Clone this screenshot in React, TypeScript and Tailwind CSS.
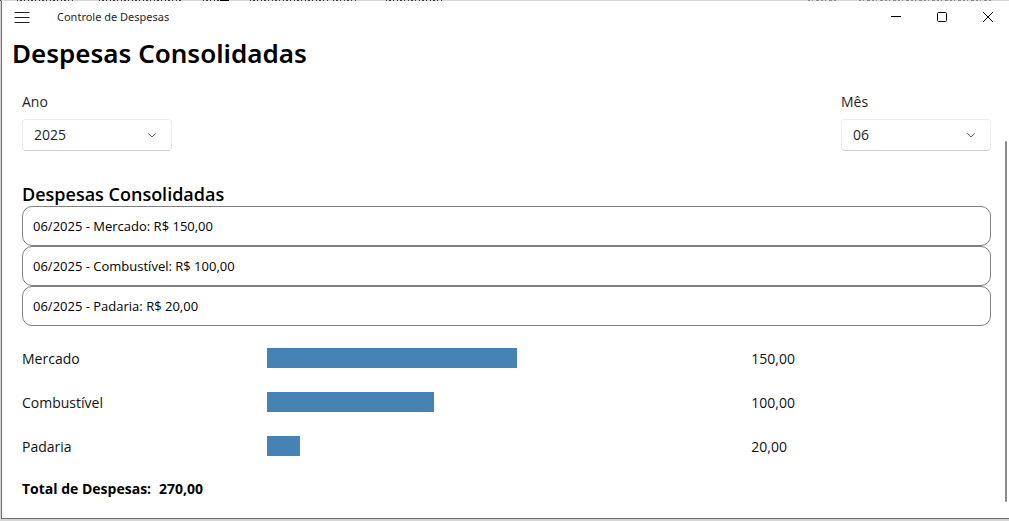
import { useState } from "react";

const years = ["2023", "2024", "2025"];
const months = ["01", "02", "03", "04", "05", "06", "07", "08", "09", "10", "11", "12"];

const expenses = [
  { category: "Mercado", amount: 150 },
  { category: "Combustível", amount: 100 },
  { category: "Padaria", amount: 20 },
];

const MAX_BAR = 250;

function money(value: number) {
  return value.toFixed(2).replace(".", ",");
}

type PickerProps = {
  id: string;
  label: string;
  value: string;
  options: string[];
  onChange: (value: string) => void;
};

function Picker({ id, label, value, options, onChange }: PickerProps) {
  return (
    <div className="flex flex-col gap-[7px]">
      <label htmlFor={id} className="text-sm text-[#1f1f1f]">
        {label}
      </label>
      <div className="relative">
        <select
          id={id}
          value={value}
          onChange={(event) => onChange(event.target.value)}
          className="block h-8 w-[150px] appearance-none rounded border border-[#ececec] border-b-[#d0d0d0] bg-white pl-[11px] text-sm text-[#1f1f1f]"
        >
          {options.map((option) => (
            <option key={option}>{option}</option>
          ))}
        </select>
        <svg
          className="pointer-events-none absolute top-3 right-4 h-2 w-2"
          viewBox="0 0 8 8"
          fill="none"
          stroke="#5f5f5f"
          aria-hidden="true"
        >
          <path d="M0.3 2.3 4 6l3.7-3.7" />
        </svg>
      </div>
    </div>
  );
}

/* Sliver of the window behind, visible above the title bar. */
function BackdropEdge() {
  return (
    <svg className="block h-px w-full" stroke="#3a3a3a" strokeWidth="1" aria-hidden="true">
      <path
        d="M0 .5h2M17 .5h58M99 .5h82M203 .5h26M250 .5h78M333 .5h24M386 .5h58"
        strokeDasharray="1 2 2 2 1 3"
      />
      <path d="M220 .5h9" stroke="#000" />
      <path d="M808 .5h30M859 .5h134" stroke="#8a8a8a" strokeDasharray="2 2 1 3 3 2" />
    </svg>
  );
}

function TitleBar() {
  return (
    <header className="flex h-8 items-center justify-between">
      <div className="flex items-center gap-[27px]">
        <button type="button" aria-label="Menu" className="pl-3">
          <svg className="h-4 w-4" viewBox="0 0 16 16" stroke="#1f1f1f" aria-hidden="true">
            <path d="M0.5 3.5h15M0.5 8.5h15M0.5 13.5h15" />
          </svg>
        </button>
        <span className="pt-px font-['Noto_Sans',sans-serif] text-[11px] text-[#1f1f1f]">
          Controle de Despesas
        </span>
      </div>
      <div className="-mr-0.5 flex">
        <button type="button" aria-label="Minimizar" className="flex h-8 w-[46px] items-center justify-center">
          <svg className="h-2.5 w-2.5" viewBox="0 0 10 10" stroke="#000" aria-hidden="true">
            <path d="M0 4.5h10" />
          </svg>
        </button>
        <button type="button" aria-label="Maximizar" className="flex h-8 w-[46px] items-center justify-center">
          <svg className="h-2.5 w-2.5" viewBox="0 0 10 10" fill="none" stroke="#000" aria-hidden="true">
            <rect x="0.5" y="0.5" width="9" height="9" rx="1" />
          </svg>
        </button>
        <button type="button" aria-label="Fechar" className="flex h-8 w-[46px] items-center justify-center">
          <svg className="h-2.5 w-2.5" viewBox="0 0 10 10" stroke="#000" aria-hidden="true">
            <path d="M0 0l10 10M10 0 0 10" />
          </svg>
        </button>
      </div>
    </header>
  );
}

export default function App() {
  const [year, setYear] = useState("2025");
  const [month, setMonth] = useState("06");
  const largest = Math.max(...expenses.map((item) => item.amount));
  const total = expenses.reduce((sum, item) => sum + item.amount, 0);

  return (
    <div className="flex min-h-screen flex-col overflow-x-hidden bg-[#d6d6d6] pb-0.5 font-['Open_Sans','Noto_Sans',sans-serif]">
      <BackdropEdge />
      <div className="relative ml-px flex grow flex-col border-b border-l border-[#6e6e6e] bg-white">
        <TitleBar />
        <h1 className="pl-2.5 font-['Noto_Sans',sans-serif] text-[26px] leading-10 font-semibold text-black">
          Despesas Consolidadas
        </h1>
        <main className="flex flex-col pt-[19px] pr-[18px] pl-5">
          <div className="flex justify-between">
            <Picker id="ano" label="Ano" value={year} options={years} onChange={setYear} />
            <Picker id="mes" label="Mês" value={month} options={months} onChange={setMonth} />
          </div>

          <h2 className="pt-[31px] text-lg leading-6 font-semibold text-black">Despesas Consolidadas</h2>
          <ul>
            {expenses.map((item) => (
              <li
                key={item.category}
                className="flex h-10 items-center rounded-[10px] border border-[#808080] px-2.5 pt-0.5 text-[13px] text-black"
              >
                {`${month}/${year} - ${item.category}: R$ ${money(item.amount)}`}
              </li>
            ))}
          </ul>

          <ul className="flex flex-col gap-6 pt-[22px]">
            {expenses.map((item) => (
              <li
                key={item.category}
                className="grid h-5 grid-cols-[1fr_2fr_1fr] gap-[5px] text-sm leading-[22px] text-[#111111]"
              >
                <span>{item.category}</span>
                <div
                  className="h-5 bg-[#4682b4]"
                  style={{ width: Math.round((item.amount / largest) * MAX_BAR) }}
                />
                <span>{money(item.amount)}</span>
              </li>
            ))}
          </ul>

          <p className="flex gap-2 pt-[23px] text-sm font-bold text-black">
            <span>Total de Despesas:</span>
            <span>{money(total)}</span>
          </p>
        </main>
        <div className="absolute top-[140px] right-0.5 bottom-4 w-0.5 rounded-full bg-[#8b8b8b]" aria-hidden="true" />
      </div>
    </div>
  );
}
